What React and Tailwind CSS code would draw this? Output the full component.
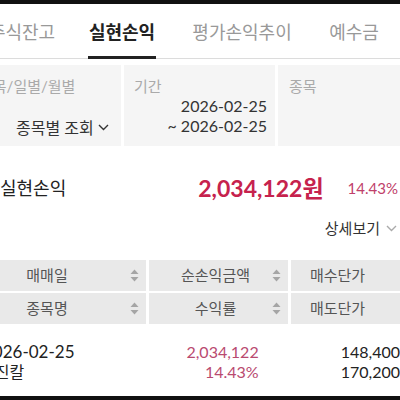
const font = { fontFamily: "Lato, 'Noto Sans CJK KR', sans-serif" };

function SortIcon() {
  return (
    <svg width="9" height="15" viewBox="0 0 9 15" className="shrink-0">
      <path d="M0.5 6 L4.5 1.5 L8.5 6 Z" fill="#a5a5a5" />
      <path d="M0.5 9 L4.5 13.5 L8.5 9 Z" fill="#a5a5a5" />
    </svg>
  )
}

function Chevron({ color = "#333", w = 11 }) {
  return (
    <svg width={w} height="7" viewBox="0 0 11 7" className="shrink-0">
      <path d="M1 1 L5.5 5.5 L10 1" fill="none" stroke={color} strokeWidth="1.4" />
    </svg>
  )
}

function HeadCell({ label, width, pad, icon = true }) {
  return (
    <div className={`${width} h-full bg-[#e9e9e9] flex items-center`}>
      <div className={`flex-1 text-center text-[15px] text-[#555] ${pad}`}>{label}</div>
      {icon && <div className="pr-[7px]"><SortIcon /></div>}
    </div>
  )
}

export default function App() {
  return (
    <div className="w-[400px] h-[400px] overflow-hidden bg-white flex flex-col" style={font}>
      <div className="h-[4px] bg-[#111] shrink-0" />

      {/* 탭 */}
      <div className="h-[55px] shrink-0 border-b border-[#dcdcdc] flex items-stretch text-[18px] whitespace-nowrap">
        <div className="ml-[-14px] w-[72px] shrink-0 flex items-center justify-center pt-[2px] text-[#999]">주식잔고</div>
        <div className="ml-[30px] w-[68px] shrink-0 flex items-center justify-center pt-[5px] font-bold text-[#222] border-b-[3px] border-[#222] -mb-px">실현손익</div>
        <div className="ml-[37px] w-[98px] shrink-0 flex items-center justify-center pt-[2px] text-[#999]">평가손익추이</div>
        <div className="ml-[38px] w-[50px] shrink-0 flex items-center justify-center pt-[2px] text-[#999]">예수금</div>
      </div>

      {/* 조회 조건 */}
      <div className="mt-[6px] h-[81px] shrink-0 flex gap-[3px]">
        <div className="w-[121px] bg-[#f5f5f5] flex flex-col whitespace-nowrap">
          <div className="ml-[-21px] mt-[10px] text-[15px] text-[#aaa]">종목/일별/월별</div>
          <div className="ml-[16px] mt-[18px] flex items-center gap-[4px] text-[16px] text-[#333]">
            종목별 조회 <Chevron />
          </div>
        </div>
        <div className="w-[151px] bg-[#f5f5f5] flex flex-col">
          <div className="ml-[10px] mt-[10px] text-[15px] text-[#aaa]">기간</div>
          <div className="pr-[8px] mt-[-2px] text-right text-[16px] leading-[20px] text-[#333]">
            <div>2026-02-25</div>
            <div>~ 2026-02-25</div>
          </div>
        </div>
        <div className="flex-1 bg-[#f5f5f5]">
          <div className="ml-[11px] mt-[10px] text-[15px] text-[#aaa]">종목</div>
        </div>
      </div>

      {/* 실현손익 합계 */}
      <div className="mt-[28px] h-[28px] shrink-0 flex items-center whitespace-nowrap">
        <div className="text-[18px] text-[#222]">실현손익</div>
        <div className="ml-[132px] text-[23px] font-bold text-[#c6224d]">2,034,122원</div>
        <div className="ml-[24px] text-[15px] text-[#c0406a]">14.43%</div>
      </div>

      <div className="mt-[16px] h-[20px] shrink-0 flex items-center justify-end gap-[6px] pr-[3px]">
        <span className="text-[15px] text-[#333]">상세보기</span>
        <Chevron color="#aaa" />
      </div>

      {/* 표 머리 */}
      <div className="mt-[22px] shrink-0 flex flex-col gap-[2px] w-[430px] ml-[-12px]">
        <div className="h-[31px] flex gap-[3px]">
          <HeadCell label="매매일" width="w-[158px]" pad="pr-[24px]" />
          <HeadCell label="순손익금액" width="w-[139px]" pad="pl-[10px]" />
          <HeadCell label="매수단가" width="flex-1" pad="pr-[18px]" />
        </div>
        <div className="h-[31px] flex gap-[3px]">
          <HeadCell label="종목명" width="w-[158px]" pad="pr-[24px]" />
          <HeadCell label="수익률" width="w-[139px]" pad="pl-[10px]" />
          <HeadCell label="매도단가" width="flex-1" pad="pr-[18px]" />
        </div>
      </div>

      {/* 데이터 */}
      <div className="pt-[18px] flex text-[16px] leading-[20px] whitespace-nowrap">
        <div className="w-[200px] text-[#222]">
          <div className="ml-[-17px] text-[17px]">2026-02-25</div>
          <div className="ml-[-20px]">한진칼</div>
        </div>
        <div className="w-[76px] text-right text-[#b94a70]">
          <div>2,034,122</div>
          <div>14.43%</div>
        </div>
        <div className="ml-[82px] text-[#222]">
          <div>148,400</div>
          <div>170,200</div>
        </div>
      </div>

      <div className="flex-1" />
      <div className="h-[4px] bg-[#111] shrink-0" />
    </div>
  )
}
